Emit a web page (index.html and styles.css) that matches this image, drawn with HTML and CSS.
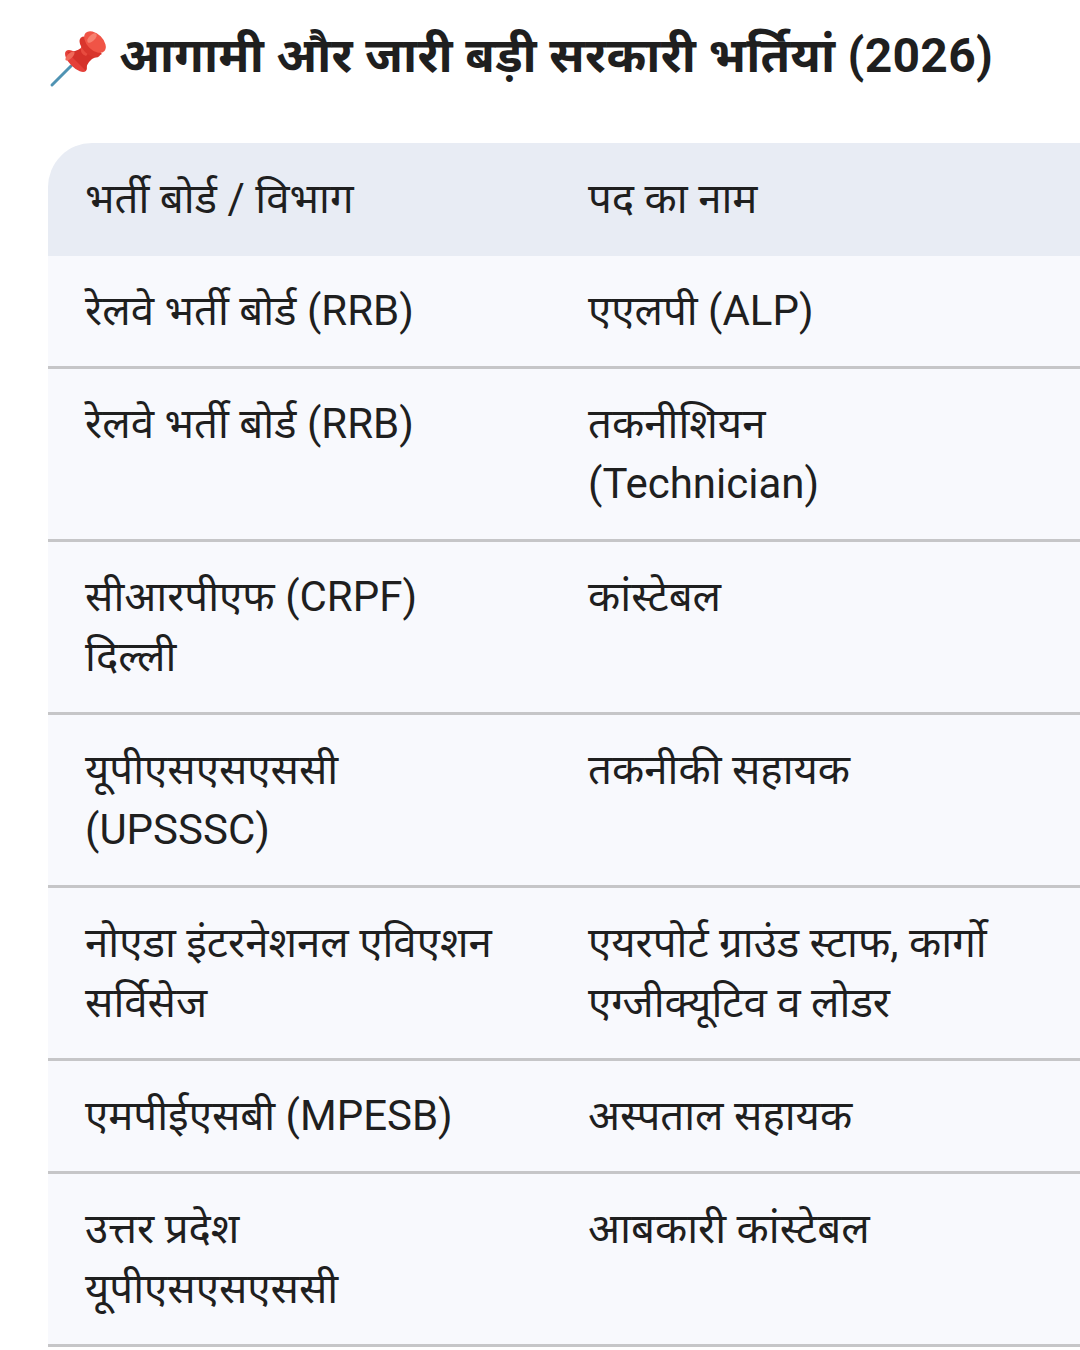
FILE: index.html
```html
<!DOCTYPE html>
<html lang="hi">
<head>
<meta charset="utf-8">
<link rel="stylesheet" href="styles.css">
</head>
<body>
<div class="page">
  <h1 class="title">
    <svg class="pin" viewBox="44 22 66 66" width="66" height="66" aria-hidden="true">
      <line x1="71" y1="62" x2="52" y2="81" stroke="#4f93b3" stroke-width="3" stroke-linecap="round"/>
      <ellipse cx="76" cy="57" rx="14" ry="6.5" transform="rotate(45 76 57)" fill="#e5403a"/>
      <path d="M67 48 Q76 48 81 44 L86 34 L102 50 L92 55 Q86 60 86 67 Z" fill="#d5312a"/>
      <path d="M81 44 L86 34 L94 42 L86 52 Q80 50 81 44 Z" fill="#e84b3f"/>
      <ellipse cx="90" cy="43" rx="13" ry="7" transform="rotate(45 90 43)" fill="#d9362d"/>
      <ellipse cx="95" cy="38" rx="13" ry="8" transform="rotate(45 95 38)" fill="#f05446"/>
      <ellipse cx="92" cy="34" rx="3" ry="6" transform="rotate(45 92 34)" fill="#f7806f"/>
      <ellipse cx="70" cy="52" rx="2.5" ry="6" transform="rotate(45 70 52)" fill="#f0695a"/>
    </svg>
    <span>आगामी और जारी बड़ी सरकारी भर्तियां (2026)</span>
  </h1>
  <div class="table-wrap">
    <table class="jobs">
      <thead>
        <tr><th>भर्ती बोर्ड / विभाग</th><th>पद का नाम</th><th></th></tr>
      </thead>
      <tbody>
        <tr><td>रेलवे भर्ती बोर्ड (RRB)</td><td>एएलपी (ALP)</td><td></td></tr>
        <tr><td>रेलवे भर्ती बोर्ड (RRB)</td><td>तकनीशियन<br>(Technician)</td><td></td></tr>
        <tr><td>सीआरपीएफ (CRPF)<br>दिल्ली</td><td>कांस्टेबल</td><td></td></tr>
        <tr><td>यूपीएसएसएससी<br>(UPSSSC)</td><td>तकनीकी सहायक</td><td></td></tr>
        <tr><td>नोएडा इंटरनेशनल एविएशन<br>सर्विसेज</td><td>एयरपोर्ट ग्राउंड स्टाफ, कार्गो<br>एग्जीक्यूटिव व लोडर</td><td></td></tr>
        <tr><td>एमपीईएसबी (MPESB)</td><td>अस्पताल सहायक</td><td></td></tr>
        <tr><td>उत्तर प्रदेश<br>यूपीएसएसएससी</td><td>आबकारी कांस्टेबल</td><td></td></tr>
      </tbody>
    </table>
  </div>
</div>
</body>
</html>
```

FILE: styles.css
```css
html, body {
  margin: 0;
  padding: 0;
  background: #ffffff;
  overflow: hidden;
}
body {
  font-family: Roboto, "Noto Sans", "Noto Sans Devanagari", sans-serif;
  color: #1f1f1f;
}
.page {
  padding: 17px 0 0 48px;
}
.title {
  display: flex;
  align-items: center;
  gap: 9px;
  margin: 0;
  height: 72px;
  font-size: 48px;
  font-weight: 700;
  letter-spacing: 0.3px;
  color: #1f1f1f;
  white-space: nowrap;
}
.pin {
  flex: none;
  margin-left: -4px;
  margin-top: 12px;
}
.table-wrap {
  margin-top: 54px;
  width: 1200px;
}
.jobs {
  border-collapse: separate;
  border-spacing: 0;
  width: 1200px;
  table-layout: fixed;
  font-size: 42px;
  line-height: 60px;
}
.jobs th, .jobs td {
  box-sizing: border-box;
  text-align: left;
  vertical-align: top;
  padding: 25px 20px 25px 37px;
  width: 503px;
  white-space: nowrap;
}
.jobs th:last-child, .jobs td:last-child {
  width: auto;
}
.jobs thead th {
  background: #e8ecf4;
  font-weight: 400;
  padding-top: 26px;
  padding-bottom: 27px;
}
.jobs thead th:first-child {
  border-top-left-radius: 44px;
}
.jobs tbody td {
  background: #f8f9fd;
  border-bottom: 3px solid #c6c6c8;
}
```
